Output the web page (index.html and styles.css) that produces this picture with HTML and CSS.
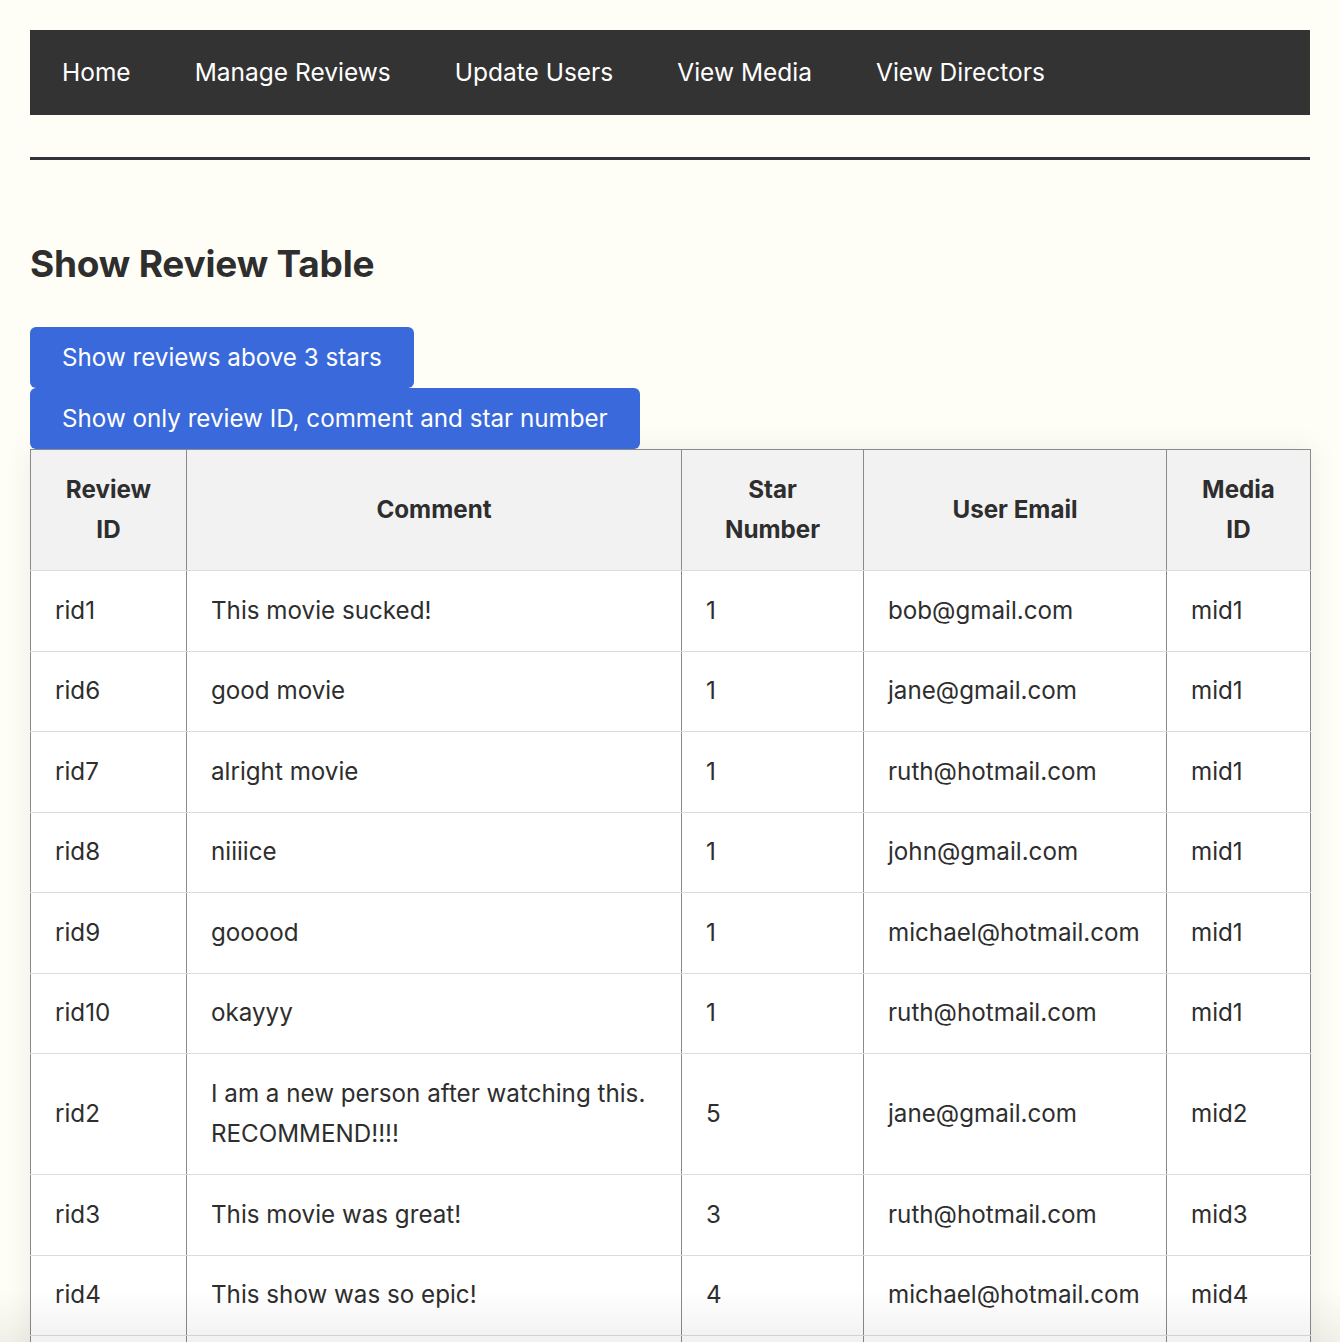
FILE: index.html
```html
<!DOCTYPE html>
<html lang="en">
<head>
<meta charset="utf-8">
<title>Show Review Table</title>
<link rel="stylesheet" href="styles.css">
</head>
<body>
<div class="page">
  <nav class="topnav">
    <a href="#">Home</a>
    <a href="#">Manage Reviews</a>
    <a href="#">Update Users</a>
    <a href="#">View Media</a>
    <a href="#">View Directors</a>
  </nav>
  <hr class="divider">
  <h2 class="title">Show Review Table</h2>
  <div class="actions">
    <button class="btn">Show reviews above 3 stars</button>
    <button class="btn">Show only review ID, comment and star number</button>
  </div>
  <table class="reviews">
    <colgroup>
      <col class="c1"><col class="c2"><col class="c3"><col class="c4"><col class="c5">
    </colgroup>
    <thead>
      <tr><th>Review ID</th><th>Comment</th><th>Star Number</th><th>User Email</th><th>Media ID</th></tr>
    </thead>
    <tbody>
      <tr><td>rid1</td><td>This movie sucked!</td><td>1</td><td>bob@gmail.com</td><td>mid1</td></tr>
      <tr><td>rid6</td><td>good movie</td><td>1</td><td>jane@gmail.com</td><td>mid1</td></tr>
      <tr><td>rid7</td><td>alright movie</td><td>1</td><td>ruth@hotmail.com</td><td>mid1</td></tr>
      <tr><td>rid8</td><td>niiiice</td><td>1</td><td>john@gmail.com</td><td>mid1</td></tr>
      <tr><td>rid9</td><td>gooood</td><td>1</td><td>michael@hotmail.com</td><td>mid1</td></tr>
      <tr><td>rid10</td><td>okayyy</td><td>1</td><td>ruth@hotmail.com</td><td>mid1</td></tr>
      <tr><td>rid2</td><td>I am a new person after watching this. RECOMMEND!!!!</td><td>5</td><td>jane@gmail.com</td><td>mid2</td></tr>
      <tr><td>rid3</td><td>This movie was great!</td><td>3</td><td>ruth@hotmail.com</td><td>mid3</td></tr>
      <tr><td>rid4</td><td>This show was so epic!</td><td>4</td><td>michael@hotmail.com</td><td>mid4</td></tr>
      <tr><td>rid5</td><td>Meh</td><td>2</td><td>john@gmail.com</td><td>mid5</td></tr>
    </tbody>
  </table>
</div>
<div class="bottom-fade"></div>
</body>
</html>
```
FILE: styles.css
```css
html, body {
  margin: 0;
  padding: 0;
}
body {
  background: #fefef6;
  font-family: Inter, "Liberation Sans", sans-serif;
  color: #2e2e2e;
}
.page {
  padding: 30px 30px 0 30px;
}
.topnav {
  display: flex;
  background: #333333;
}
.topnav a {
  color: #ffffff;
  text-decoration: none;
  font-size: 24.5px;
  line-height: 29px;
  padding: 28px 32px;
}
.divider {
  border: 0;
  height: 3px;
  background: #30333a;
  margin: 42px 0 0 0;
}
.title {
  font-size: 37px;
  font-weight: 700;
  line-height: 45px;
  margin: 81px 0 41px 0;
  color: #2e2e2e;
  letter-spacing: -0.2px;
}
.actions {
  display: flex;
  flex-direction: column;
  align-items: flex-start;
}
.btn {
  background: #3a69db;
  color: #ffffff;
  border: 0;
  border-radius: 6px;
  font-family: inherit;
  font-size: 24.2px;
  line-height: 29px;
  padding: 16px 32px;
  cursor: pointer;
}
.reviews {
  width: 100%;
  table-layout: fixed;
  border-collapse: collapse;
  border: 1px solid #8a8a8a;
  box-shadow: 0 0 28px rgba(0, 0, 0, 0.07);
  font-size: 24.2px;
}
.c1 { width: 156px; }
.c2 { width: 495px; }
.c3 { width: 182px; }
.c4 { width: 303px; }
.c5 { width: 144px; }
.reviews th,
.reviews td {
  border-left: 1px solid #8a8a8a;
  border-right: 1px solid #8a8a8a;
  border-bottom: 1px solid #dcdcdc;
  padding: 19.5px 24px;
  line-height: 40.5px;
  vertical-align: middle;
}
.reviews th {
  background: #f2f2f2;
  font-weight: 700;
  text-align: center;
  color: #2e2e2e;
}
.reviews td {
  background: #ffffff;
  text-align: left;
  font-weight: 400;
  color: #2e2e2e;
}
.bottom-fade {
  position: fixed;
  left: 0;
  right: 0;
  bottom: 0;
  height: 52px;
  background: linear-gradient(to bottom, rgba(0, 0, 0, 0), rgba(0, 0, 0, 0.055));
  pointer-events: none;
}
```
